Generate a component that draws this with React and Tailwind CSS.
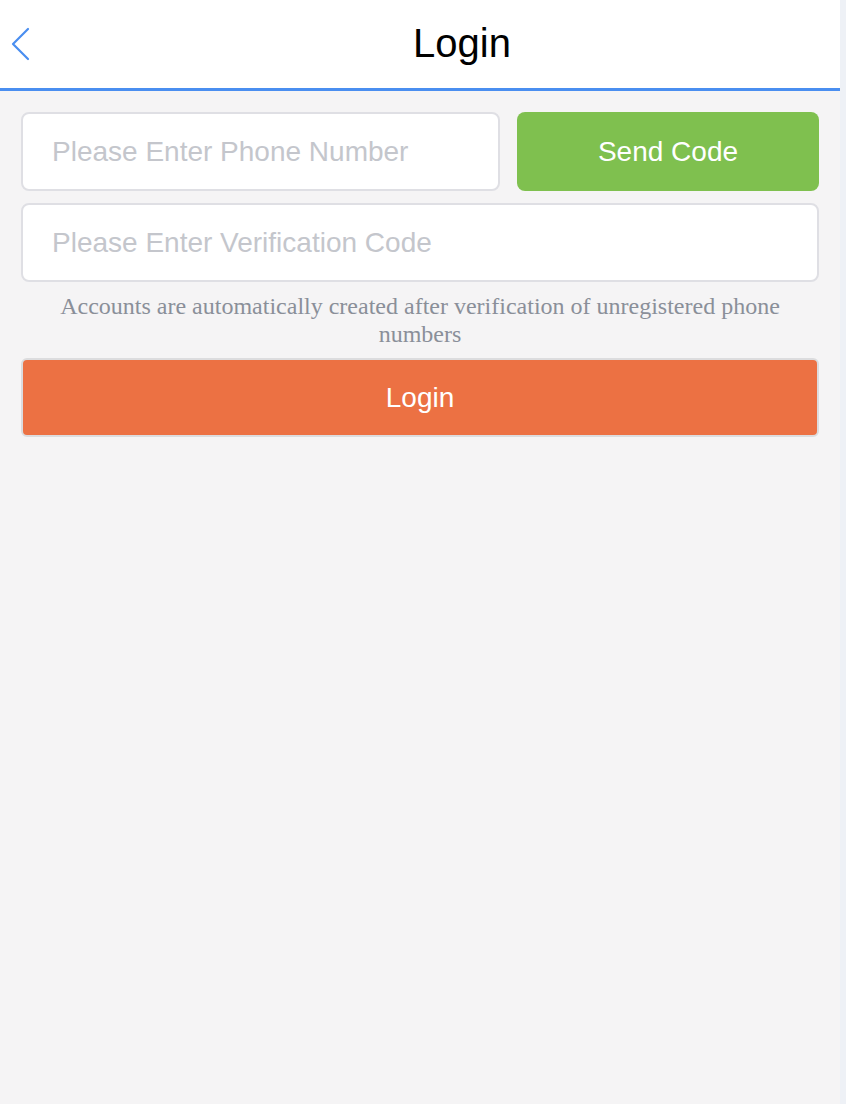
export default function App() {
  return (
    <div className="flex w-[846px] min-h-[1104px]" style={{ fontFamily: '"Liberation Sans", Arial, sans-serif' }}>
      <div className="w-[840px] bg-[#f5f4f5] flex flex-col">
        <header className="h-[91px] bg-white border-b-[3px] border-[#4a8ef0] flex items-center">
          <button className="w-[84px] h-full flex items-center pl-[10px]">
            <svg width="22" height="36" viewBox="0 0 22 36" fill="none">
              <path d="M18 3 L3 18 L18 33" stroke="#4a8ef0" strokeWidth="2.2" strokeLinecap="round" strokeLinejoin="round" />
            </svg>
          </button>
          <h1 className="flex-1 text-center text-[40px] text-black leading-none pb-[2px]">Login</h1>
        </header>
        <div className="px-[21px] pt-[21px] flex flex-col">
          <div className="flex gap-[17px]">
            <div className="w-[479px] h-[79px] bg-white border-2 border-[#dfdfe4] rounded-[8px] flex items-center pl-[29px]">
              <span className="text-[28px] text-[#c4c6cc]">Please Enter Phone Number</span>
            </div>
            <button className="flex-1 h-[79px] bg-[#7fc04f] rounded-[8px] text-white text-[28px] flex items-center justify-center">
              Send Code
            </button>
          </div>
          <div className="mt-[12px] h-[79px] bg-white border-2 border-[#dfdfe4] rounded-[8px] flex items-center pl-[29px]">
            <span className="text-[28px] text-[#c4c6cc]">Please Enter Verification Code</span>
          </div>
          <p className="mt-[10px] text-center text-[24px] leading-[28px] text-[#8a8f99] px-[10px]" style={{ fontFamily: '"Liberation Serif", "Times New Roman", serif' }}>
            Accounts are automatically created after verification of unregistered phone numbers
          </p>
          <button className="mt-[10px] h-[79px] bg-[#ec7143] border-2 border-[#dcdcde] rounded-[6px] text-white text-[28px] flex items-center justify-center">
            Login
          </button>
        </div>
      </div>
      <div className="w-[6px] bg-[#eef1f6]" />
    </div>
  );
}
